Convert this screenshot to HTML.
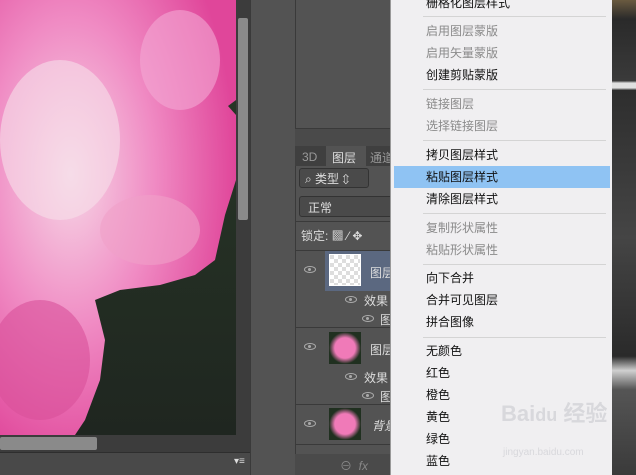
<!DOCTYPE html>
<html><head><meta charset="utf-8"><style>
*{margin:0;padding:0;box-sizing:border-box}
body{width:636px;height:475px;overflow:hidden;background:#535353;font-family:"Liberation Sans","Noto Sans CJK SC",sans-serif;position:relative}
.abs{position:absolute}
.menu{position:absolute;left:390px;top:0;width:222px;height:475px;background:#f0eff1;border-left:1px solid #999}
.it{position:absolute;left:35px;font-size:12px;color:#111;line-height:14px;white-space:nowrap}
.dis{color:#8a8a8a}
.sep{position:absolute;left:32px;right:6px;height:1px;background:#d4d4d4}
.hl{position:absolute;left:3px;width:216px;top:166px;height:22px;background:#8fc3f3}
.t{color:#ddd;font-size:12px;position:absolute;white-space:nowrap}
.eye{position:absolute;width:12px;height:7px;border:1.5px solid #aaa;border-radius:50%}
.eye:after{content:"";position:absolute;left:3px;top:1px;width:3px;height:3px;background:#aaa;border-radius:50%}
</style></head><body>
<svg class="abs" style="left:0;top:0" width="236" height="435">
<defs>
<radialGradient id="g1" cx="0.3" cy="0.4" r="0.7"><stop offset="0" stop-color="#f6d7e6"/><stop offset="0.5" stop-color="#f08cc4"/><stop offset="1" stop-color="#e0469a"/></radialGradient>
<linearGradient id="gd" x1="0" y1="0" x2="0" y2="1"><stop offset="0" stop-color="#2a3a28"/><stop offset="1" stop-color="#1f2620"/></linearGradient>
</defs>
<rect width="236" height="435" fill="url(#gd)"/>
<polygon points="0,0 236,0 236,100 228,106 236,115 236,180 225,215 215,260 195,275 160,285 120,290 95,300 105,340 100,380 85,420 75,435 0,435" fill="url(#g1)"/>
<ellipse cx="60" cy="140" rx="60" ry="80" fill="#f7dfea" opacity="0.6"/>
<ellipse cx="40" cy="360" rx="50" ry="60" fill="#d8509a" opacity="0.6"/>
<ellipse cx="180" cy="60" rx="40" ry="50" fill="#f4a9d3" opacity="0.6"/>
<ellipse cx="150" cy="230" rx="50" ry="35" fill="#f0a0c8" opacity="0.6"/>
</svg>
<div class="abs" style="left:236px;top:0;width:14px;height:435px;background:#3c3c3c"></div>
<div class="abs" style="left:238px;top:18px;width:10px;height:202px;background:#8a8a8a;border-radius:2px"></div>
<div class="abs" style="left:0;top:435px;width:250px;height:17px;background:#3c3c3c"></div>
<div class="abs" style="left:0;top:437px;width:97px;height:13px;background:#8a8a8a;border-radius:2px"></div>
<div class="abs" style="left:0;top:452px;width:250px;height:23px;background:#494949;border-top:1px solid #2e2e2e"></div>
<div class="t" style="left:234px;top:456px;font-size:10px">▾≡</div>
<div class="abs" style="left:250px;top:0;width:45px;height:475px;background:#535353;border-left:1px solid #3a3a3a"></div>
<div class="abs" style="left:295px;top:0;width:95px;height:128px;background:#535353;border-left:1px solid #3a3a3a"></div>
<div class="abs" style="left:295px;top:128px;width:95px;height:18px;background:#4a4a4a;border-top:1px solid #3a3a3a"></div>
<div class="abs" style="left:295px;top:146px;width:95px;height:20px;background:#3f3f3f"></div>
<div class="t" style="left:302px;top:150px;color:#999">3D</div>
<div class="abs" style="left:326px;top:146px;width:40px;height:20px;background:#535353"></div>
<div class="t" style="left:332px;top:149px">图层</div>
<div class="t" style="left:370px;top:149px;color:#999">通道</div>
<div class="abs" style="left:295px;top:166px;width:95px;height:309px;background:#535353;border-left:1px solid #3a3a3a"></div>
<div class="abs" style="left:299px;top:168px;width:70px;height:20px;background:#4a4a4a;border:1px solid #333;border-radius:3px"></div>
<div class="t" style="left:305px;top:170px">⌕ 类型 ⇕</div>
<div class="abs" style="left:299px;top:196px;width:95px;height:21px;background:#4a4a4a;border:1px solid #333;border-radius:3px"></div>
<div class="t" style="left:308px;top:199px">正常</div>
<div class="abs" style="left:295px;top:221px;width:95px;height:1px;background:#3a3a3a"></div>
<div class="t" style="left:301px;top:227px">锁定: ▩ ⁄ ✥</div>
<div class="abs" style="left:295px;top:250px;width:95px;height:1px;background:#3a3a3a"></div>
<div class="abs" style="left:325px;top:251px;width:65px;height:40px;background:#5b6880"></div>
<div class="abs" style="left:329px;top:254px;width:32px;height:32px;background:repeating-conic-gradient(#fff 0 25%,#ddd 0 50%) 0 0/8px 8px;border:1px solid #fff"></div>
<div class="t" style="left:370px;top:264px">图层</div>
<div class="eye" style="left:304px;top:266px"></div>
<div class="eye" style="left:345px;top:296px"></div>
<div class="eye" style="left:362px;top:315px"></div>
<div class="t" style="left:364px;top:292px">效果</div>
<div class="t" style="left:380px;top:311px">图</div>
<div class="abs" style="left:295px;top:327px;width:95px;height:1px;background:#3a3a3a"></div>
<div class="abs" style="left:329px;top:332px;width:32px;height:32px;background:radial-gradient(circle,#f07ab8 45%,#203020 70%)"></div>
<div class="eye" style="left:304px;top:343px"></div>
<div class="eye" style="left:345px;top:373px"></div>
<div class="eye" style="left:362px;top:392px"></div>
<div class="t" style="left:370px;top:341px">图层</div>
<div class="t" style="left:364px;top:369px">效果</div>
<div class="t" style="left:380px;top:388px">图</div>
<div class="abs" style="left:295px;top:404px;width:95px;height:1px;background:#3a3a3a"></div>
<div class="abs" style="left:329px;top:408px;width:32px;height:32px;background:radial-gradient(circle,#f07ab8 45%,#203020 70%)"></div>
<div class="eye" style="left:304px;top:420px"></div>
<div class="t" style="left:372px;top:417px;font-style:italic">背景</div>
<div class="abs" style="left:295px;top:444px;width:95px;height:1px;background:#3a3a3a"></div>
<div class="abs" style="left:295px;top:454px;width:95px;height:21px;background:#4a4a4a"></div>
<div class="t" style="left:340px;top:457px;color:#888">⊖ &nbsp;<i>fx</i></div>
<div class="menu">
<div class="hl"></div>
<div class="it" style="top:-4px">栅格化图层样式</div>
<div class="sep" style="top:16px"></div>
<div class="it dis" style="top:24px">启用图层蒙版</div>
<div class="it dis" style="top:46px">启用矢量蒙版</div>
<div class="it" style="top:68px">创建剪贴蒙版</div>
<div class="sep" style="top:89px"></div>
<div class="it dis" style="top:97px">链接图层</div>
<div class="it dis" style="top:119px">选择链接图层</div>
<div class="sep" style="top:140px"></div>
<div class="it" style="top:148px">拷贝图层样式</div>
<div class="it" style="top:170px">粘贴图层样式</div>
<div class="it" style="top:192px">清除图层样式</div>
<div class="sep" style="top:213px"></div>
<div class="it dis" style="top:221px">复制形状属性</div>
<div class="it dis" style="top:243px">粘贴形状属性</div>
<div class="sep" style="top:264px"></div>
<div class="it" style="top:271px">向下合并</div>
<div class="it" style="top:293px">合并可见图层</div>
<div class="it" style="top:315px">拼合图像</div>
<div class="sep" style="top:337px"></div>
<div class="it" style="top:344px">无颜色</div>
<div class="it" style="top:366px">红色</div>
<div class="it" style="top:388px">橙色</div>
<div class="it" style="top:410px">黄色</div>
<div class="it" style="top:432px">绿色</div>
<div class="it" style="top:454px">蓝色</div>
<div class="it" style="top:402px;left:110px;font-size:22px;line-height:24px;color:#d8d8dc;font-weight:bold">Bai<span style="font-size:18px">du</span> 经验</div>
<div class="it" style="top:446px;left:112px;font-size:10px;color:#d8d8dc">jingyan.baidu.com</div>
</div>
<div class="abs" style="left:612px;top:0;width:24px;height:475px;background:linear-gradient(#6a5a40 0,#2a2a2a 4%,#3a3a3a 17%,#e0e0e0 17.5%,#e0e0e0 18.5%,#2e2e2e 19%,#454545 50%,#2a2a2a 75%,#d0d0d0 78%,#555 82%,#3a3a3a 100%)"></div>
</body></html>
